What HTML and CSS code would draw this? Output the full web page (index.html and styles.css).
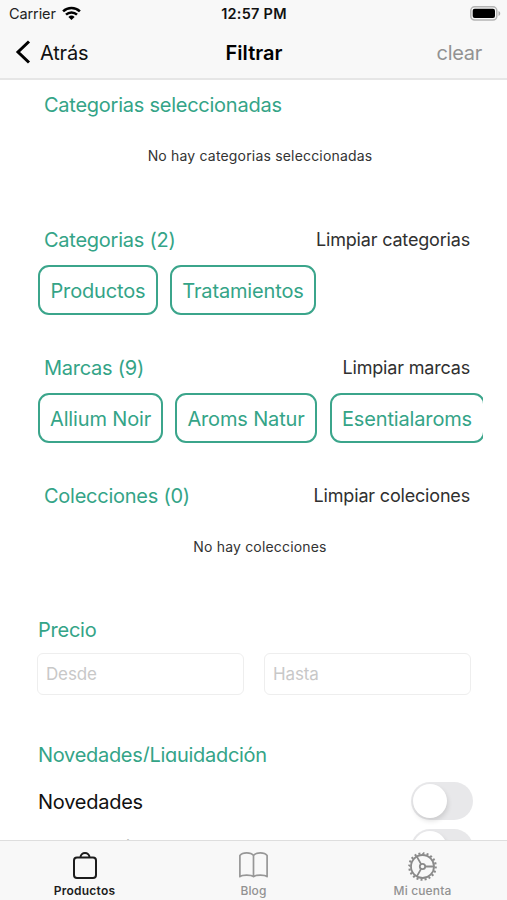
FILE: index.html
```html
<!DOCTYPE html>
<html lang="es">
<head>
<meta charset="utf-8">
<title>Filtrar</title>
<link rel="stylesheet" href="styles.css">
</head>
<body>
<header class="header">
  <div class="status">
    <div class="carrier"><span>Carrier</span>
      <svg width="19" height="15" viewBox="0 0 19 15" fill="none" stroke="#000" stroke-width="2.5"><path d="M1.1 5.3a12.1 12.1 0 0 1 16.8 0M4 8.6a8 8 0 0 1 11 0"/><path d="M9.5 14 6.4 10.9a4.5 4.5 0 0 1 6.2 0z" fill="#000" stroke="none"/></svg>
    </div>
    <span class="time">12:57 PM</span>
    <svg class="battery" width="31" height="15" viewBox="0 0 31 15"><rect x=".8" y=".8" width="26" height="13.2" rx="3.8" fill="#f8f8f8" stroke="#b4b4b4" stroke-width="1.5"/><rect x="2.7" y="2.7" width="22.3" height="9.4" rx="2" fill="#000"/><path d="M28.5 5c2.3.7 2.3 4.3 0 5z" fill="#aaa"/></svg>
  </div>
  <nav class="navbar">
    <a class="back"><svg width="16" height="24" viewBox="0 0 16 24" fill="none" stroke="#000" stroke-width="3"><path d="M14 1.5 3 12l11 10.5"/></svg><span>Atrás</span></a>
    <h1 class="title">Filtrar</h1>
    <a class="clear">clear</a>
  </nav>
</header>
<main class="content">
  <section class="group selected">
    <div class="row"><h2>Categorias seleccionadas</h2></div>
    <p class="empty">No hay categorias seleccionadas</p>
  </section>
  <section class="group chips-group">
    <div class="row"><h2>Categorias (2)</h2><a class="reset">Limpiar categorias</a></div>
    <div class="chips"><span class="chip c1">Productos</span><span class="chip c2">Tratamientos</span></div>
  </section>
  <section class="group chips-group">
    <div class="row"><h2>Marcas (9)</h2><a class="reset">Limpiar marcas</a></div>
    <div class="chips"><span class="chip c3">Allium Noir</span><span class="chip c4">Aroms Natur</span><span class="chip c5">Esentialaroms</span></div>
  </section>
  <section class="group collections">
    <div class="row"><h2>Colecciones (0)</h2><a class="reset">Limpiar coleciones</a></div>
    <p class="empty">No hay colecciones</p>
  </section>
  <section class="price">
    <h2>Precio</h2>
    <div class="fields"><input placeholder="Desde"><input placeholder="Hasta"></div>
  </section>
  <section class="news">
    <h2 class="clipped">Novedades/Liquidadción</h2>
    <div class="switch-row"><span>Novedades</span><i class="switch"></i></div>
    <div class="switch-row"><span>Liquidación</span><i class="switch"></i></div>
  </section>
</main>
<footer class="tabs">
  <a class="tab active">
    <svg width="32" height="30" viewBox="0 0 32 30" fill="none" stroke="#1c1c1c" stroke-width="2"><rect x="5" y="6.500" width="22" height="20.500" rx="3"/><path d="M11.500 6.500c0-6 9-6 9 0"/></svg>
    <span>Productos</span>
  </a>
  <a class="tab">
    <svg width="32" height="30" viewBox="0 0 32 30" fill="none" stroke="#979797" stroke-width="1.700" stroke-linejoin="round"><path d="M15.500 4.500Q13.500 1.800 8.700 1.800T1.900 4.500V25.700q1.800-1.600 6.800-1.600t6.800 1.600q1.800-1.600 6.800-1.600t6.800 1.600V4.500Q27.100 1.800 22.300 1.800T15.500 4.500V25.700"/></svg>
    <span>Blog</span>
  </a>
  <a class="tab">
    <svg width="32" height="30" viewBox="0 0 32 30" fill="none" stroke="#8a8a8a" stroke-width="1.800"><circle cx="15.500" cy="15.500" r="11.500"/><circle cx="15.500" cy="15.500" r="13.200" stroke-width="2.200" pathLength="50" stroke-dasharray="1.200 1.300"/><circle cx="15.500" cy="15.500" r="2.700"/><path d="M18.200 15.500h9M14.100 13.100 9.700 5.400M14.100 17.900l-4.400 7.700"/></svg>
    <span>Mi cuenta</span>
  </a>
</footer>
</body>
</html>
```
FILE: styles.css
```css
* { box-sizing: border-box; }
body {
  margin: 0;
  width: 507px;
  height: 900px;
  overflow: hidden;
  display: flex;
  flex-direction: column;
  font-family: Inter, "Liberation Sans", sans-serif;
  background: #fff;
  color: #111;
}
h1, h2, p { margin: 0; font-weight: 400; }

.header { height: 80px; flex: none; background: #f8f8f8; border-bottom: 2px solid #e6e6e6; }
.status {
  height: 27px;
  display: grid;
  grid-template-columns: 1fr auto 1fr;
  align-items: center;
  padding: 0 6px 0 9px;
  font-size: 14.5px;
}
.carrier { display: flex; align-items: center; gap: 6px; color: #222; letter-spacing: -.1px; }
.carrier svg { margin-top: -1px; }
.time { font-weight: 600; font-size: 14.5px; letter-spacing: .25px; padding-right: 2px; }
.battery { justify-self: end; }
.navbar {
  height: 51px;
  display: grid;
  grid-template-columns: 1fr auto 1fr;
  align-items: center;
  padding: 0 25px 0 15px;
  font-size: 20px;
}
.back { display: flex; align-items: center; gap: 9px; letter-spacing: -.2px; }
.back svg { margin-top: -1px; }
.title { font-size: 20px; font-weight: 600; color: #000; padding-left: 11px; }
.clear { justify-self: end; color: #929292; letter-spacing: -.3px; }

.content { flex: 1; min-height: 0; overflow: hidden; padding: 11px 24px 0 38px; }
h2 { font-size: 20px; line-height: 29px; height: 28px; color: #34a487; white-space: nowrap; letter-spacing: -.25px; }
.row { display: flex; justify-content: space-between; padding: 0 13px 0 6px; }
.reset { font-size: 18px; line-height: 28px; color: #303030; letter-spacing: -.18px; }
.empty { text-align: center; font-size: 14px; line-height: 20px; color: #333; letter-spacing: .18px; padding-right: 1px; }
.selected { height: 135px; }
.selected .empty { margin-top: 27px; }
.chips-group { height: 128px; }
.chips { display: flex; gap: 12px; margin-top: 11px; overflow: hidden; }
.chip {
  flex: none;
  height: 50px;
  border: 2px solid #3ba58b;
  border-radius: 11px;
  padding: 0 10px;
  font-size: 20px;
  line-height: 48px;
  letter-spacing: -.15px;
  color: #34a487;
  text-align: center;
  white-space: nowrap;
}
.c1 { width: 120px; }
.c2 { width: 146px; }
.c3 { width: 125px; }
.c4 { width: 142px; }
.c5 { width: 155px; margin-left: 1px; padding: 0 10px 0 9px; }
.collections { height: 134px; }
.collections .empty { margin-top: 27px; }
.price { height: 125px; }
.fields { display: grid; grid-template-columns: 207px 207px; gap: 20px; margin: 9px 0 0 -1px; }
.fields input {
  height: 42px;
  border: 1.5px solid #eee;
  border-radius: 6px;
  padding: 0 8px;
  font: 17px Inter, sans-serif;
  letter-spacing: -.15px;
  background: #fff;
  outline: 0;
}
.fields input::placeholder { color: #c8c8c8; opacity: 1; }
.clipped { height: 21px; line-height: 28px; overflow: hidden; letter-spacing: -.29px; }
.news { padding-right: 10px; }
.switch-row { display: flex; justify-content: space-between; align-items: center; height: 38px; margin-top: 20px; font-size: 20px; line-height: 26px; letter-spacing: -.25px; }
.switch-row span { padding-top: 2px; }
.switch-row + .switch-row { margin-top: 9px; }
.switch-row + .switch-row span { padding-top: 0; }
.switch { width: 62px; height: 38px; border-radius: 19px; background: #e8e8ea; padding: 2px; }
.switch::before {
  content: "";
  display: block;
  width: 34px;
  height: 34px;
  border-radius: 50%;
  background: #fff;
  box-shadow: 1px 3px 5px rgba(0, 0, 0, .12);
}

.tabs { height: 60px; flex: none; display: grid; grid-template-columns: repeat(3, 1fr); background: #f8f8f8; border-top: 1px solid #dedede; }
.tab { display: flex; flex-direction: column; align-items: center; padding-top: 10px; font-size: 12px; font-weight: 500; line-height: 16px; color: #929292; letter-spacing: .15px; }
.tab svg { display: block; margin-bottom: 2px; }
.active { color: #1c1c1c; font-weight: 600; letter-spacing: .25px; }
```
